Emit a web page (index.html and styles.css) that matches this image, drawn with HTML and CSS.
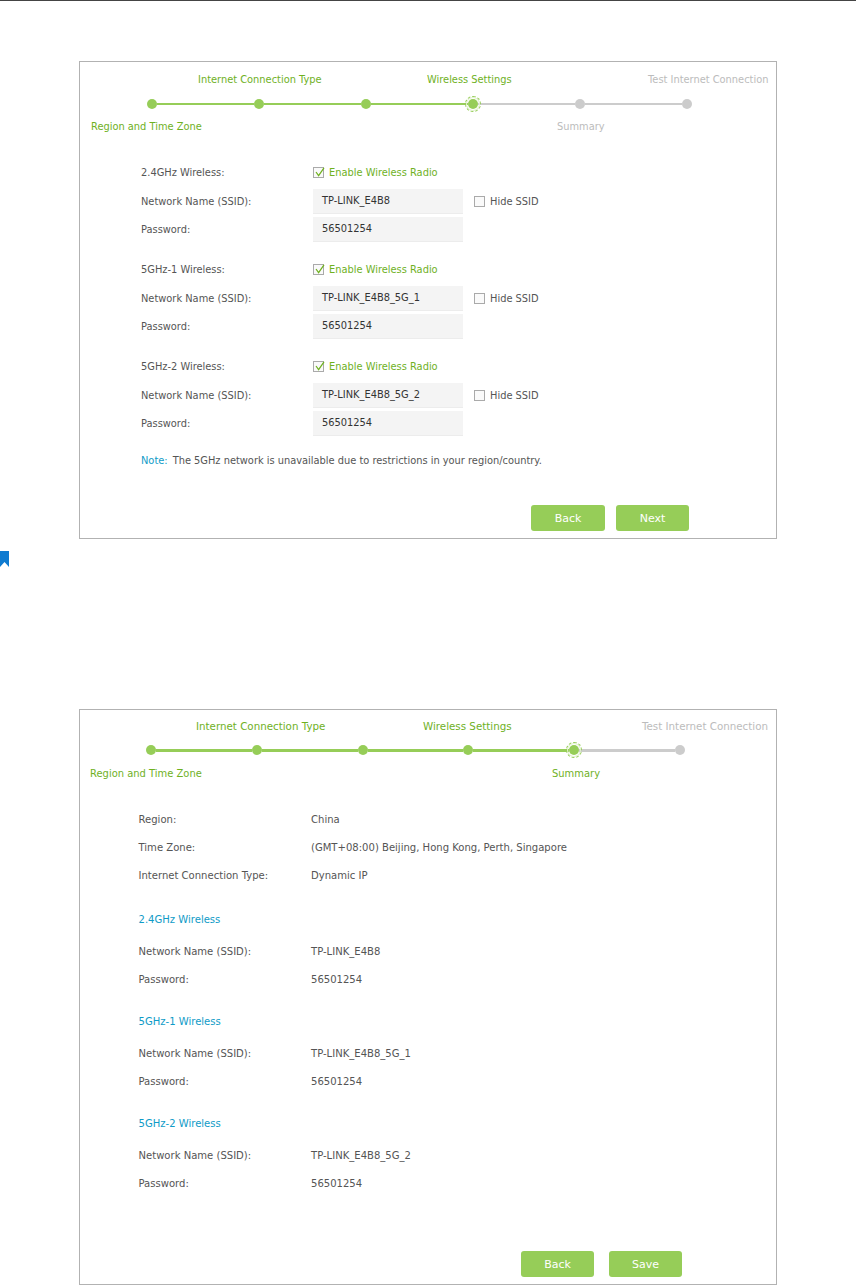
FILE: index.html
```html
<!DOCTYPE html>
<html lang="en">
<head>
<meta charset="utf-8">
<title>Quick Setup</title>
<link rel="stylesheet" href="styles.css">
</head>
<body>
<div class="topline"></div>

<section class="card card-wireless">
  <div class="labels labels-top">
    <span class="lab done w-a1">Internet Connection Type</span>
    <span class="lab done w-a2">Wireless Settings</span>
    <span class="lab todo">Test Internet Connection</span>
  </div>
  <div class="track">
    <i class="dot on"></i><i class="seg on"></i>
    <i class="dot on"></i><i class="seg on"></i>
    <i class="dot on"></i><i class="seg on"></i>
    <i class="dot on cur"></i><i class="seg"></i>
    <i class="dot"></i><i class="seg"></i>
    <i class="dot"></i>
  </div>
  <div class="labels labels-bottom">
    <span class="lab done w-a3">Region and Time Zone</span>
    <span class="lab todo">Summary</span>
  </div>

  <div class="form">
    <div class="group">
      <div class="row"><span class="k">2.4GHz Wireless:</span><span class="check on"><svg viewBox="0 0 11 11"><path d="M2 5l2.6 3.6L10 .8"/></svg></span><span class="en">Enable Wireless Radio</span></div>
      <div class="row field"><span class="k">Network Name (SSID):</span><span class="input">TP-LINK_E4B8</span><span class="check hide"></span><span class="hs">Hide SSID</span></div>
      <div class="row field"><span class="k">Password:</span><span class="input">56501254</span></div>
    </div>
    <div class="group">
      <div class="row"><span class="k">5GHz-1 Wireless:</span><span class="check on"><svg viewBox="0 0 11 11"><path d="M2 5l2.6 3.6L10 .8"/></svg></span><span class="en">Enable Wireless Radio</span></div>
      <div class="row field"><span class="k">Network Name (SSID):</span><span class="input">TP-LINK_E4B8_5G_1</span><span class="check hide"></span><span class="hs">Hide SSID</span></div>
      <div class="row field"><span class="k">Password:</span><span class="input">56501254</span></div>
    </div>
    <div class="group">
      <div class="row"><span class="k">5GHz-2 Wireless:</span><span class="check on"><svg viewBox="0 0 11 11"><path d="M2 5l2.6 3.6L10 .8"/></svg></span><span class="en">Enable Wireless Radio</span></div>
      <div class="row field"><span class="k">Network Name (SSID):</span><span class="input">TP-LINK_E4B8_5G_2</span><span class="check hide"></span><span class="hs">Hide SSID</span></div>
      <div class="row field"><span class="k">Password:</span><span class="input">56501254</span></div>
    </div>
    <p class="note"><b>Note:</b>The 5GHz network is unavailable due to restrictions in your region/country.</p>
  </div>
  <div class="buttons">
    <button class="btn">Back</button>
    <button class="btn">Next</button>
  </div>
</section>

<div class="bookmark"><svg viewBox="0 0 9 16"><path d="M0 0h9v16L4.5 11 0 16z"/></svg></div>

<section class="card card-summary">
  <div class="labels labels-top">
    <span class="lab done w-b1">Internet Connection Type</span>
    <span class="lab done w-b2">Wireless Settings</span>
    <span class="lab todo">Test Internet Connection</span>
  </div>
  <div class="track">
    <i class="dot on"></i><i class="seg on"></i>
    <i class="dot on"></i><i class="seg on"></i>
    <i class="dot on"></i><i class="seg on"></i>
    <i class="dot on"></i><i class="seg on"></i>
    <i class="dot on cur"></i><i class="seg"></i>
    <i class="dot"></i>
  </div>
  <div class="labels labels-bottom">
    <span class="lab done w-b3">Region and Time Zone</span>
    <span class="lab done">Summary</span>
  </div>

  <div class="summary">
    <div class="sgroup">
      <div class="srow"><span class="k">Region:</span><span class="v">China</span></div>
      <div class="srow"><span class="k">Time Zone:</span><span class="v">(GMT+08:00) Beijing, Hong Kong, Perth, Singapore</span></div>
      <div class="srow"><span class="k">Internet Connection Type:</span><span class="v">Dynamic IP</span></div>
    </div>
    <div class="sgroup">
      <h3 class="sh">2.4GHz Wireless</h3>
      <div class="srow"><span class="k">Network Name (SSID):</span><span class="v">TP-LINK_E4B8</span></div>
      <div class="srow"><span class="k">Password:</span><span class="v">56501254</span></div>
    </div>
    <div class="sgroup">
      <h3 class="sh">5GHz-1 Wireless</h3>
      <div class="srow"><span class="k">Network Name (SSID):</span><span class="v">TP-LINK_E4B8_5G_1</span></div>
      <div class="srow"><span class="k">Password:</span><span class="v">56501254</span></div>
    </div>
    <div class="sgroup">
      <h3 class="sh">5GHz-2 Wireless</h3>
      <div class="srow"><span class="k">Network Name (SSID):</span><span class="v">TP-LINK_E4B8_5G_2</span></div>
      <div class="srow"><span class="k">Password:</span><span class="v">56501254</span></div>
    </div>
  </div>
  <div class="buttons">
    <button class="btn">Back</button>
    <button class="btn">Save</button>
  </div>
</section>
</body>
</html>
```
FILE: styles.css
```css
* { box-sizing: border-box; }
html, body { margin: 0; padding: 0; background: #fff; }
body {
  width: 856px;
  height: 1286px;
  overflow: hidden;
  font-family: "DejaVu Sans", sans-serif;
  font-size: 9.85px;
  color: #555;
}
.topline { height: 1px; background: #444; }

.card {
  width: 698px;
  margin-left: 79px;
  border: 1px solid #b2b2b2;
  background: #fff;
}
.card-wireless { height: 478px; margin-top: 60px; padding: 10px 0 0 0; }
.card-summary { height: 576px; margin-top: 142px; padding: 9px 0 0 0; font-size: 10.05px; }

.labels { display: flex; height: 14px; line-height: 14px; white-space: nowrap; }
.lab.done { color: #6fb11f; }
.lab.todo { color: #bcbcbc; }

.card-wireless .labels-top { padding-left: 118px; height: 15px; line-height: 15px; }
.card-wireless .w-a1 { width: 229px; }
.card-wireless .w-a2 { width: 221px; }
.card-wireless .labels-bottom { padding-left: 11px; margin-top: 11px; }
.card-wireless .w-a3 { width: 466px; }

.card-summary .labels-top { padding-left: 116px; font-size: 10.3px; }
.card-summary .w-b1 { width: 227px; }
.card-summary .w-b2 { width: 219px; }
.card-summary .labels-bottom { padding-left: 10px; margin-top: 12px; font-size: 9.95px; }
.card-summary .w-b3 { width: 462px; }

.track { display: flex; align-items: center; height: 10px; }
.card-wireless .track { margin: 12px 0 0 67px; }
.card-summary .track { margin: 12px 0 0 66px; }
.dot { flex: none; position: relative; width: 10px; height: 10px; border-radius: 50%; background: #ccc; }
.dot.on { background: #96cd58; }
.dot.cur::after {
  content: "";
  position: absolute;
  inset: -3px;
  border: 1px dashed #96cd58;
  border-radius: 50%;
  box-shadow: inset 0 0 0 1px #e3f1d0;
}
.seg { flex: none; width: 97px; height: 2px; background: #ccc; }
.seg.on { background: #96cd58; }
.card-summary .seg { width: 95.8px; height: 3px; }

.form { padding: 23px 0 0 61px; }
.group { margin-bottom: 11px; }
.row { display: flex; align-items: center; height: 30px; }
.row.field { height: 28px; }
.k { flex: none; width: 172px; }
.input {
  flex: none;
  display: flex;
  align-items: center;
  width: 150px;
  height: 25px;
  padding-left: 9px;
  background: #f4f4f4;
  border-bottom: 1px solid #ececec;
  color: #333;
}
.check {
  flex: none;
  display: block;
  width: 11px;
  height: 11px;
  border: 1px solid #aaa;
  background: #fafafa;
}
.check svg { display: block; width: 11px; height: 11px; margin: -1px 0 0 0; }
.check svg path { fill: none; stroke: #6fb11f; stroke-width: 1.2; }
.check.hide { margin-left: 11px; }
.en { margin-left: 5px; color: #6fb11f; }
.hs { margin-left: 5px; }
.note { margin: 0; padding-top: 6px; line-height: 14px; color: #555; }
.note b { font-weight: normal; color: #0f9bc7; margin-right: 5px; }

.buttons { display: flex; }
.card-wireless .buttons { margin: 37px 0 0 451px; gap: 11px; }
.card-summary .buttons { margin: 54px 0 0 441px; gap: 15px; }
.btn {
  flex: none;
  width: 74px;
  height: 26px;
  padding: 0;
  border: 0;
  border-radius: 3px;
  background: #96cd58;
  color: #fff;
  font: inherit;
  font-size: 11px;
}
.btn:last-child { width: 73px; }
.card-summary .btn { width: 73px; }

.bookmark { height: 16px; margin-top: 12px; }
.bookmark svg { display: block; width: 9px; height: 16px; }
.bookmark path { fill: #0f7bd0; }

.summary { padding: 24px 0 0 58.5px; }
.sgroup { margin-bottom: 14px; }
.sgroup:first-child { margin-bottom: 16px; }
.srow { display: flex; align-items: center; height: 28px; }
.srow .k { width: 172.5px; }
.v { color: #555; }
.sh { margin: 0 0 4px; height: 28px; line-height: 29px; font-size: inherit; font-weight: normal; color: #0f9bc7; }
```
